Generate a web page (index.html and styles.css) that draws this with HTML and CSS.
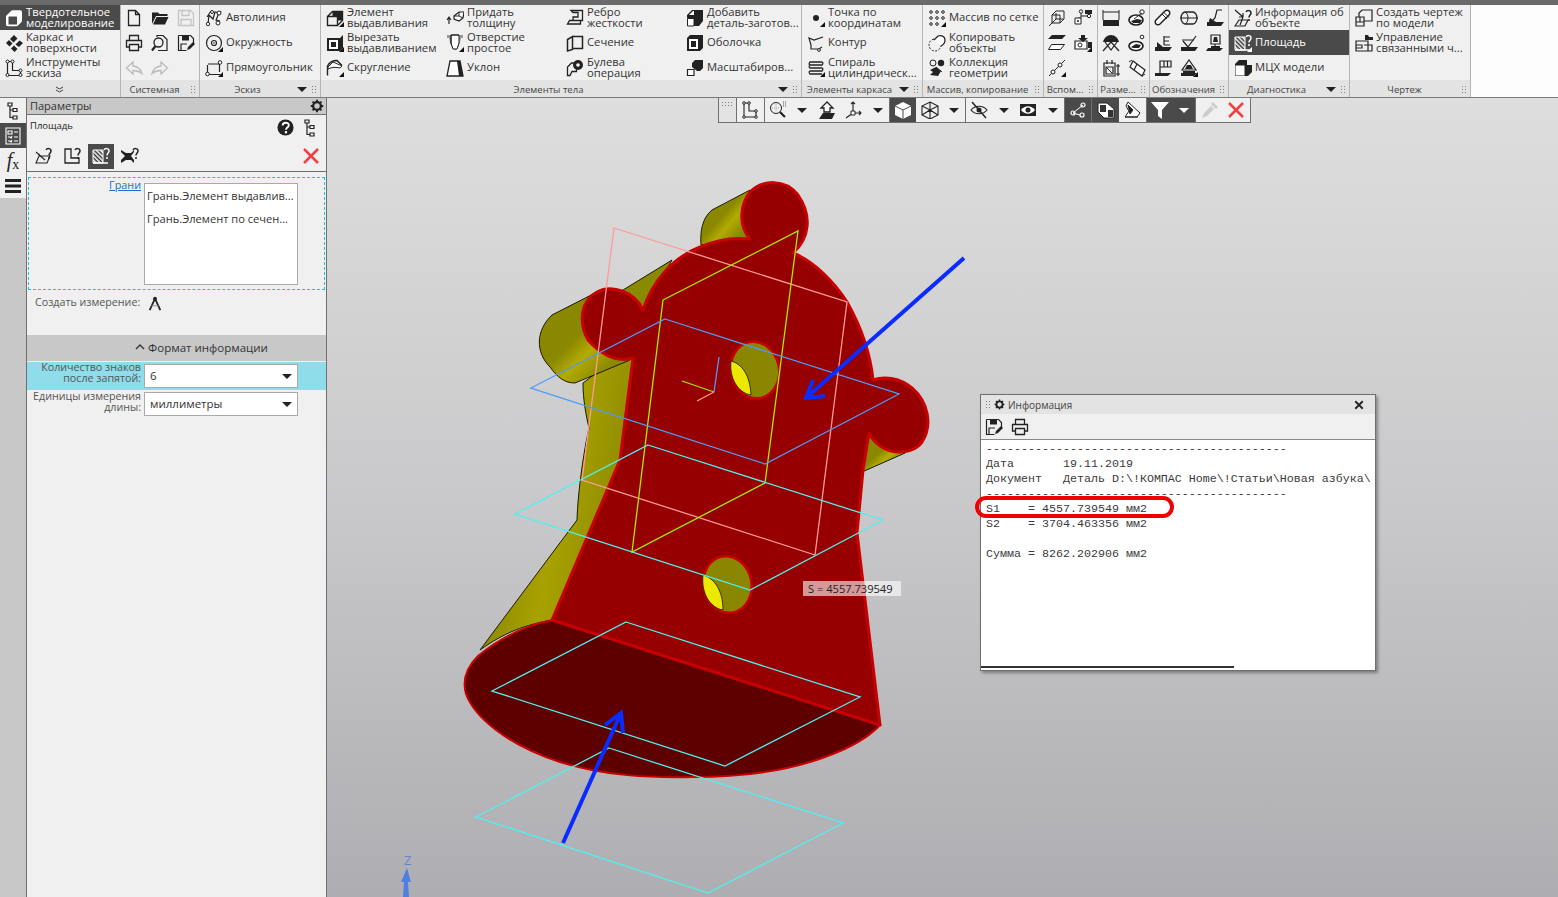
FILE: index.html
```html
<!DOCTYPE html>
<html lang="ru">
<head>
<meta charset="utf-8">
<title>КОМПАС — Площадь</title>
<link rel="stylesheet" href="styles.css">
</head>
<body>
<svg class="defs" aria-hidden="true">
<symbol id="mk" viewBox="0 0 18 18"><path d="M18 13v5h-5z" fill="#111"/></symbol>
<symbol id="mk2" viewBox="0 0 18 18"><path d="M18 13v5h-5z" fill="#fff"/></symbol>
<symbol id="solid" viewBox="0 0 18 18"><path d="M1 7l5-5c.5-.5 1-.7 2-.7h7c1.500 0 2 .7 2 2v8c0 1-.2 1.400-.7 2l-3.300 3.300c-.5.500-1 .7-2 .7H3c-1.300 0-2-.7-2-2z" fill="currentColor"/><path d="M3.500 7.500h8.500v8H3.500z" fill="#4a4a4a"/></symbol>
<symbol id="surf" viewBox="0 0 18 18"><path d="M5 5l4-4 3.500 3.500-4 4zM10.500 10.500l4-4L18 9l-4 4zM1 9l3-3 3.500 3.500-3 3zM6 14.500l3-3 3.500 3.500-3 3z" fill="#222"/></symbol>
<symbol id="sk" viewBox="0 0 18 18"><path d="M2.500 2.500h5v9h8v5h-13z" fill="none" stroke="#222" stroke-width="1.200"/><g fill="#fff" stroke="#222"><circle cx="2.500" cy="2.500" r="1.500"/><circle cx="7.500" cy="2.500" r="1.500"/><circle cx="15.500" cy="11.500" r="1.500"/><circle cx="2.500" cy="16" r="1.500"/><circle cx="15.500" cy="16" r="1.500"/></g></symbol>
<symbol id="new" viewBox="0 0 18 18"><path d="M3.500 1.500h7l4 4v11h-11zM10.500 1.500v4h4" fill="none" stroke="#222" stroke-width="1.300"/></symbol>
<symbol id="open" viewBox="0 0 18 18"><path d="M1 5V3.500h6l1.500 1.500h8v2H5L1 15z M2 15.500l3.500-7.500h12L14 15.500z" fill="#222"/></symbol>
<symbol id="save" viewBox="0 0 18 18"><path d="M1.500 1.500h12l3 3v12h-15zM5 1.500v5h7v-5M4 16.500v-6h10v6" fill="none" stroke="currentColor" stroke-width="1.300"/></symbol>
<symbol id="saveas" viewBox="0 0 18 18"><path d="M1.500 1.500h12l3 3v6M1.500 1.500v15h8M4 16v-6h6" fill="none" stroke="#222" stroke-width="1.200"/><path d="M5 1.500h7v5H5z" fill="#222"/><path d="M10 16l1-3 5-5 2 2-5 5z" fill="#222"/></symbol>
<symbol id="print" viewBox="0 0 18 18"><path d="M4.500 6.500v-5h9v5M4 13H1.500V6.500h15V13H14M4.500 10.500h9v6h-9z" fill="none" stroke="#222" stroke-width="1.300"/></symbol>
<symbol id="prev" viewBox="0 0 18 18"><path d="M6 3V1.500h6l4 4v11H7" fill="none" stroke="#222" stroke-width="1.200"/><circle cx="7.500" cy="8.500" r="4.500" fill="none" stroke="#222" stroke-width="1.300"/><path d="M4.500 12L1 16.500" stroke="#222" stroke-width="2.200"/></symbol>
<symbol id="undo" viewBox="0 0 18 18"><path d="M8 3L1.500 9 8 15v-3.500c3 0 6 .5 9 3-1-4-4-7-9-7.500z" fill="none" stroke="#bbb" stroke-width="1.300"/></symbol>
<symbol id="redo" viewBox="0 0 18 18"><path d="M10 3l6.500 6-6.500 6v-3.500c-3 0-6 .5-9 3 1-4 4-7 9-7.500z" fill="none" stroke="#bbb" stroke-width="1.300"/></symbol>
<symbol id="auto" viewBox="0 0 18 18"><path d="M3 15l1-9 4 4 2-7 4 1-3 7 4 1M6 2L2 8M16 2l-2 3" fill="none" stroke="#222" stroke-width="1.200"/><g fill="#fff" stroke="#222"><circle cx="3" cy="15" r="1.700"/><circle cx="13" cy="14" r="2"/><circle cx="14" cy="4" r="2"/><circle cx="7" cy="3" r="1.500"/></g></symbol>
<symbol id="circ" viewBox="0 0 18 18"><circle cx="9" cy="9" r="7.500" fill="none" stroke="#222" stroke-width="1.200"/><circle cx="9" cy="9" r="2.500" fill="none" stroke="#222" stroke-width="1.200"/><circle cx="9" cy="9" r=".8" fill="#222"/></symbol>
<symbol id="rect" viewBox="0 0 18 18"><path d="M2.500 6v9.500h13M3 5h11.500v8" fill="none" stroke="#222" stroke-width="1.200"/><g fill="#fff" stroke="#222"><circle cx="15" cy="3.500" r="1.800"/><circle cx="2.500" cy="15" r="1.800"/></g></symbol>
<symbol id="ext" viewBox="0 0 18 18"><path d="M1.500 16.500V7.500h10v9zM1.500 7.500l5-5h10v9l-5 5" fill="none" stroke="#222" stroke-width="1.400"/><path d="M6.500 2.500h10v9h-5v-4h-5z" fill="#222"/></symbol>
<symbol id="cut" viewBox="0 0 18 18"><path d="M1 4h13l3-3v13l-3 3H1z" fill="#222"/><path d="M3 6h9v9H3z" fill="#fff"/><path d="M5 8h5v5H5z" fill="#222"/></symbol>
<symbol id="fil" viewBox="0 0 18 18"><path d="M1.500 16.500V7C3 4 6 1.500 11 1.500l5 5" fill="none" stroke="#222" stroke-width="1.400"/><path d="M2 8l5-5 9 4-2 2c-4-1-8-1-12 1z" fill="#fff" stroke="#222"/></symbol>
<symbol id="thick" viewBox="0 0 18 18"><path d="M8 7l5-4h5l-1 6-4 3-5-2z" fill="#fff" stroke="#222" stroke-width="1.200"/><path d="M13 3v4l4 2M8 7l5 0" stroke="#222" fill="none"/><path d="M3 15V9M1 11l2-3 2 3" stroke="#222" fill="none" stroke-width="1.200"/></symbol>
<symbol id="hole" viewBox="0 0 18 18"><path d="M1 1h16v3h-2l-2 8-3 4H8l-3-4-2-8H1z" fill="#999"/><path d="M5 1h8v8l-2 6H7L5 9z" fill="#fff" stroke="#222"/><path d="M5 1h8M5 1v9" stroke="#222"/></symbol>
<symbol id="slope" viewBox="0 0 18 18"><path d="M4 2h10l3 15H1z" fill="#fff" stroke="#222" stroke-width="1.300"/><path d="M11 2h3l3 15h-4z" fill="#222"/></symbol>
<symbol id="rib" viewBox="0 0 18 18"><path d="M5 1.500h11.500v10h-2V15H1.500l2-3.500H7V8h5V3.500H7zM3 11.500h11" fill="none" stroke="#222" stroke-width="1.300"/></symbol>
<symbol id="sect" viewBox="0 0 18 18"><path d="M1.500 5.500l5-3v13l-5 1.500zM6.500 2.500h10v12h-10" fill="none" stroke="#222" stroke-width="1.500"/></symbol>
<symbol id="bool" viewBox="0 0 18 18"><path d="M1.500 16.500V8l4-4h5v8.500H6l-2 4z" fill="none" stroke="#222" stroke-width="1.300"/><circle cx="12" cy="6" r="5" fill="#222"/><circle cx="12" cy="6" r="1.800" fill="#fff"/></symbol>
<symbol id="add" viewBox="0 0 18 18"><path d="M1 17V6l5-5h11v11l-4 5H8V9H1z" fill="#222"/><path d="M1.500 9.500h6.500v7.500H1.500z" fill="#fff" stroke="#222"/><path d="M7 2l-4 4h5V2z" fill="#fff"/></symbol>
<symbol id="shell" viewBox="0 0 18 18"><path d="M1 4l3-3h13v13l-3 3H1z" fill="#222"/><path d="M3 5h9v10H3z" fill="#fff"/><path d="M5 7h5v6H5z" fill="#222"/></symbol>
<symbol id="scale" viewBox="0 0 18 18"><path d="M6 8V4l3-3h8v8l-3 3h-3V8zM6 8h5v4" fill="#222"/><path d="M1.500 10.500h6.500v6H1.500z" fill="#fff" stroke="#222" stroke-width="1.200"/></symbol>
<symbol id="pt" viewBox="0 0 18 18"><circle cx="9" cy="9" r="3" fill="#222"/></symbol>
<symbol id="contour" viewBox="0 0 18 18"><path d="M16 3L7 6 2 4l2 7v4h8l3-2" fill="none" stroke="#222" stroke-width="1.200"/><circle cx="12" cy="16" r="1.400" fill="#fff" stroke="#222"/></symbol>
<symbol id="spiral" viewBox="0 0 18 18"><path d="M3 3h12c2 1 0 3 0 3H3c-2-1 0-3 0-3zM3 6c-2 2 0 3 0 3h12c2 1 0 3 0 3H3c-2 1 0 3 0 3h12" fill="none" stroke="#222" stroke-width="1.300"/></symbol>
<symbol id="grid" viewBox="0 0 18 18"><g fill="none" stroke="#222"><circle cx="3" cy="3" r="1.300"/><circle cx="9" cy="3" r="1.300"/><circle cx="15" cy="3" r="1.300"/><circle cx="3" cy="9" r="1.300"/><circle cx="9" cy="9" r="1.300"/><circle cx="15" cy="9" r="1.300"/><circle cx="3" cy="15" r="1.300"/><circle cx="9" cy="15" r="1.300"/></g></symbol>
<symbol id="copy" viewBox="0 0 18 18"><circle cx="7" cy="11" r="6" fill="none" stroke="#222" stroke-dasharray="2 1.500"/><path d="M6 6l4-4c3-1 7 0 7 4 0 3-2 5-4 6" fill="#fff" stroke="#222" stroke-width="1.300"/></symbol>
<symbol id="coll" viewBox="0 0 18 18"><circle cx="5" cy="4" r="3" fill="none" stroke="#222"/><circle cx="13" cy="4" r="3.200" fill="#222"/><path d="M2 11l6-3 5 4-3 5-8-1 3-3z" fill="#222"/><path d="M8 8l6 5" stroke="#222"/></symbol>
<symbol id="a1" viewBox="0 0 18 18"><path d="M4 6h8v8H4zM4 6l4-4h8v8l-4 4M1 17l7-7M8 10h7M8 10V4" fill="none" stroke="#222"/></symbol>
<symbol id="a2" viewBox="0 0 18 18"><path d="M7 2v7H4M7 7h7M2 13h5" fill="none" stroke="#222"/><circle cx="7" cy="2.500" r="1.700" fill="#fff" stroke="#222"/><circle cx="15" cy="7" r="1.700" fill="#fff" stroke="#222"/><path d="M11 1h7v4h-7z" fill="#222"/><path d="M1 9h6v6H1z" fill="#fff" stroke="#222"/><circle cx="4" cy="12" r="1" fill="#222"/></symbol>
<symbol id="a3" viewBox="0 0 18 18"><path d="M4 1h14l-4 4H0z" fill="#222"/><path d="M3.500 10.500h13l-4 5H.5z" fill="#fff" stroke="#222"/></symbol>
<symbol id="a4" viewBox="0 0 18 18"><path d="M1 7h12v8H1z" fill="#fff" stroke="#222" stroke-width="1.200"/><path d="M7 1h4v3h3l-5 4-5-4h3zM14 8h4v6h-4z" fill="#222"/><circle cx="6" cy="11" r="2" fill="none" stroke="#222"/></symbol>
<symbol id="a5" viewBox="0 0 18 18"><path d="M1 17L17 1" stroke="#222"/><circle cx="5" cy="13" r="2" fill="#fff" stroke="#222"/><circle cx="12" cy="6" r="2" fill="#fff" stroke="#222"/></symbol>
<symbol id="d1" viewBox="0 0 18 18"><path d="M1 1v10M17 1v10M1 3h16" fill="none" stroke="#222"/><path d="M1 11h16v6H1z" fill="#222"/><path d="M4 11l-3 3" stroke="#222"/></symbol>
<symbol id="d2" viewBox="0 0 18 18"><ellipse cx="8" cy="11" rx="7" ry="5" fill="#fff" stroke="#222" stroke-width="1.700"/><path d="M3 12l6-2 5 1-2 3H5z" fill="#222"/><circle cx="14" cy="3" r="2.200" fill="#fff" stroke="#222"/><path d="M6 10l8-6" stroke="#222"/></symbol>
<symbol id="d3" viewBox="0 0 18 18"><path d="M1 8c1-4 4-7 8-7s7 3 8 7H1z" fill="#222"/><path d="M3 8l6 8 6-8M1 17l8-9 8 9" fill="none" stroke="#222" stroke-width="1.200"/></symbol>
<symbol id="d4" viewBox="0 0 18 18"><ellipse cx="8" cy="12" rx="7" ry="4.500" fill="#fff" stroke="#222" stroke-width="1.700"/><path d="M3 13l5-3 5 1-2 3H5z" fill="#222"/><circle cx="14" cy="3" r="1.800" fill="#fff" stroke="#222"/></symbol>
<symbol id="d5" viewBox="0 0 18 18"><path d="M2 4h11v13H2zM5 1v4M10 1v4M16 5v12M14 7h4M14 15h4M4 8h7v7H4z" fill="none" stroke="#222" stroke-width="1.200"/><path d="M5 9l5 5" stroke="#222"/></symbol>
<symbol id="d6" viewBox="0 0 18 18"><path d="M5 2l12 9-3 6-12-9zM5 2L2 8M9 5l-3 6" fill="#fff" stroke="#222" stroke-width="1.200"/><path d="M1 3l3-2M17 15l-3 2" stroke="#222"/></symbol>
<symbol id="n1" viewBox="0 0 18 18"><path d="M2 11l9-9c1-1 3-1 4 0s1 3 0 4l-9 9c-1 1-3 1-4 0s-1-3 0-4z" fill="#fff" stroke="#222" stroke-width="1.500"/><path d="M8 5l5 5M10 3.500l5 5" stroke="#222"/></symbol>
<symbol id="n2" viewBox="0 0 18 18"><path d="M5 3h8c2 0 4 3 4 6s-2 6-4 6H5C3 15 1 12 1 9s2-6 4-6z" fill="none" stroke="#222" stroke-width="1.300"/><path d="M5 3c2 1 3 3 3 6s-1 5-3 6M0 9h18" fill="none" stroke="#222"/></symbol>
<symbol id="n3" viewBox="0 0 18 18"><path d="M1 13h17l-3 4H1z" fill="#222"/><path d="M16 1h-5L9 9l-3 3-3-1" fill="none" stroke="#222" stroke-width="1.200"/><path d="M4 9l6 4H3z" fill="#222"/></symbol>
<symbol id="n4" viewBox="0 0 18 18"><path d="M1 13h17l-3 4H1z" fill="#222"/><path d="M10 2v9M10 3h6M10 7h5M10 11h6" fill="none" stroke="#222" stroke-width="1.200"/><path d="M3 8l6 5H3z" fill="#222"/></symbol>
<symbol id="n5" viewBox="0 0 18 18"><path d="M1 13h17l-3 4H1z" fill="#222"/><path d="M3 7l5 6 8-11" fill="none" stroke="#222" stroke-width="1.200"/><path d="M2 6l12 0" stroke="#222"/></symbol>
<symbol id="n6" viewBox="0 0 18 18"><path d="M2 14h15l-3 3H0z" fill="#222"/><path d="M5 1h9v9H5zM9 10v4" fill="none" stroke="#222" stroke-width="1.200"/><path d="M8 3h3l1 5H7zM5 12h9v2H5z" fill="#222"/></symbol>
<symbol id="n7" viewBox="0 0 18 18"><path d="M1 14h16l-3 3H1z" fill="#222"/><path d="M6 2h11v6H6zM10 2v6M13.500 2v6M6 2v12" fill="none" stroke="#222" stroke-width="1.200"/></symbol>
<symbol id="n8" viewBox="0 0 18 18"><path d="M1 14h16l-3 3H1z" fill="#222"/><path d="M9 1l7 10H2z" fill="none" stroke="#222" stroke-width="1.200"/><path d="M7 6h4l2 4H5zM3 12h12v2H3z" fill="#222"/></symbol>
<symbol id="info" viewBox="0 0 18 18"><path d="M1 1l8 7M9 8H5M9 8V4M1 17l4-6h9l-3 6zM9 8l-3 8" fill="none" stroke="#222" stroke-width="1.200"/></symbol>
<symbol id="area" viewBox="0 0 18 18"><path d="M1 3h10v13H1z" fill="url(#hatch)" stroke="currentColor"/><path d="M1 16h15" stroke="currentColor" stroke-width="1.500"/></symbol>
<symbol id="qm" viewBox="0 0 18 18"><path d="M12 3c1-2 5-2 5 1 0 2-2 2-2 4.500M15 10v2" fill="none" stroke="currentColor" stroke-width="1.500"/></symbol>
<symbol id="mch" viewBox="0 0 18 18"><path d="M1 17V5l4-4h8v5l5 0v7l-4 4z" fill="#222"/><path d="M1.500 6.500h9v10h-9z" fill="#fff"/></symbol>
<symbol id="draw" viewBox="0 0 18 18"><path d="M1 8h8v9H1zM4 8V4l3-3h10v11h-8M1 13h8M5 8v5" fill="none" stroke="#222" stroke-width="1.200"/></symbol>
<symbol id="link" viewBox="0 0 18 18"><path d="M1 7h12v10H1zM1 11h6v3H1M9 11h8v6H9" fill="none" stroke="#222" stroke-width="1.200"/><path d="M10 1h3l1 2h4v3h-8z" fill="#222"/></symbol>
<symbol id="tree" viewBox="0 0 18 18"><path d="M4 1h4v3H4zM9 6.500h4v3H9zM9 14h4v3H9zM6 4v11.500h3M6 8h3" fill="none" stroke="#222" stroke-width="1.200"/></symbol>
<symbol id="form" viewBox="0 0 18 18"><path d="M2 1h14v16H2zM4 4h4v3H4zM10 5h4M4 10h2l1 1 1-2M10 10h4M4 14h2l1 1 1-2M10 14h4" fill="none" stroke="currentColor" stroke-width="1.100"/></symbol>
<symbol id="bars" viewBox="0 0 18 18"><path d="M1 2h16v3H1zM1 7.500h16v3H1zM1 13h16v3H1z" fill="#222"/></symbol>
<symbol id="gear" viewBox="0 0 18 18"><circle cx="9" cy="9" r="5" fill="none" stroke="#222" stroke-width="3"/><path d="M9 1v3M9 14v3M1 9h3M14 9h3M3.300 3.300l2 2M12.700 12.700l2 2M3.300 14.700l2-2M12.700 5.300l2-2" stroke="#222" stroke-width="2.400"/></symbol>
<symbol id="help" viewBox="0 0 18 18"><circle cx="9" cy="9" r="8.500" fill="#222"/><path d="M6 7c0-4 6.500-4 6.500-.5 0 2.500-3 2.500-3 5" fill="none" stroke="#fff" stroke-width="2"/><path d="M8.300 12.800h2.400v2.400H8.300z" fill="#fff"/></symbol>
<symbol id="cross" viewBox="0 0 18 18"><path d="M2 2l14 14M16 2L2 16" stroke="#f04040" stroke-width="2.500" fill="none"/></symbol>
<symbol id="p1" viewBox="0 0 18 18"><path d="M2 16l3-7h11l-3 7zM2 5l9 8M7 10l-2-3" fill="none" stroke="#222" stroke-width="1.100"/></symbol>
<symbol id="p2" viewBox="0 0 18 18"><path d="M2 2h6v9h8v5H2z" fill="none" stroke="#222" stroke-width="1.300"/></symbol>
<symbol id="p4" viewBox="0 0 18 18"><path d="M0 3l5 3h5l3-3v2l-3 4 3 4v3l-3-3H5l-5 3v-3l4-4-4-4z" fill="#222"/></symbol>
<symbol id="comp" viewBox="0 0 18 18"><path d="M9 3L3 16M9 3l6 13" fill="none" stroke="#222" stroke-width="2"/><circle cx="9" cy="3" r="2.200" fill="#222"/><path d="M5 11h8" stroke="#888"/></symbol>
<symbol id="lcs" viewBox="0 0 18 18"><path d="M3 2h5v8h7v6H3z" fill="none" stroke="#222" stroke-width="1.100"/><g fill="#fff" stroke="#222"><circle cx="3" cy="2" r="1.300"/><circle cx="8" cy="2" r="1.300"/><circle cx="15" cy="10" r="1.300"/><circle cx="3" cy="16" r="1.300"/><circle cx="15" cy="16" r="1.300"/></g></symbol>
<symbol id="zoom" viewBox="0 0 18 18"><circle cx="7" cy="7" r="5.500" fill="none" stroke="#222"/><path d="M7 3v8M3 7h8" stroke="#aaa" stroke-dasharray="1 1"/><path d="M11 11l5 5" stroke="#222" stroke-width="2.200"/><path d="M14 1h3M14 3h3M14 5h3" stroke="#555" stroke-dasharray="1 1"/></symbol>
<symbol id="orient" viewBox="0 0 18 18"><path d="M9 1l6 6h-3v4h-6V7H3z" fill="#fff" stroke="#222" stroke-width="1.300"/><path d="M5 12h12l-3 6H1z" fill="#222"/></symbol>
<symbol id="axes" viewBox="0 0 18 18"><path d="M9 1v11M7 3l2-2 2 2M9 12h8M15 10l2 2-2 2M9 12l-7 5" fill="none" stroke="#222" stroke-width="1.100"/><path d="M7 10h4v4H7z" fill="#fff" stroke="#222"/></symbol>
<symbol id="cube" viewBox="0 0 18 18"><path d="M9 1l8 4v9l-8 4-8-4V5z" fill="#fff"/><path d="M1 5l8 4 8-4M9 9v9" fill="none" stroke="#4a4a4a"/></symbol>
<symbol id="wire" viewBox="0 0 18 18"><path d="M9 1l8 4v9l-8 4-8-4V5zM1 5l8 4 8-4M9 9v9M1 14l8-5 8 5M9 1v8" fill="none" stroke="#222" stroke-width="1.100"/></symbol>
<symbol id="eyeoff" viewBox="0 0 18 18"><path d="M1 9c4-5 12-5 16 0-4 5-12 5-16 0z" fill="none" stroke="#222" stroke-width="1.200"/><circle cx="9" cy="9" r="2.500" fill="#222"/><path d="M2 1l14 16" stroke="#222" stroke-width="1.500"/></symbol>
<symbol id="eyebox" viewBox="0 0 18 18"><path d="M1 3h16v12H1z" fill="#222"/><path d="M2 9c4-5 10-5 14 0-4 5-10 5-14 0z" fill="#fff"/><circle cx="9" cy="9" r="2.500" fill="#222"/></symbol>
<symbol id="nodes" viewBox="0 0 18 18"><path d="M4 12l10-8M11 14l-7-2" stroke="#fff" fill="none"/><g fill="none" stroke="#fff" stroke-width="1.200"><circle cx="4" cy="12" r="2"/><circle cx="14" cy="4" r="2"/><circle cx="13" cy="14" r="2"/></g></symbol>
<symbol id="layers" viewBox="0 0 18 18"><path d="M1 2h9l7 6v9H7L1 11z" fill="#fff" stroke="currentColor"/><path d="M3 4h6v7H3zM11 9h5v7h-5z" fill="#333"/></symbol>
<symbol id="layers2" viewBox="0 0 18 18"><path d="M5 1l12 11-3 4H2l4-6-3-5z" fill="#fff" stroke="#222"/><path d="M5 4l5 5-3 4-1-5zM2 16h13" fill="#222" stroke="#222"/></symbol>
<symbol id="funnel" viewBox="0 0 18 18"><path d="M0 1h18l-7 8v9l-4-3V9z" fill="#fff"/></symbol>
<symbol id="drop" viewBox="0 0 18 18"><path d="M1 17l2-5 7-7 3 3-7 7zM10 3l2-2 5 5-2 2z" fill="#ccc"/></symbol>
<symbol id="closeb" viewBox="0 0 12 12"><path d="M1.500 1.500l9 9M10.500 1.500l-9 9" stroke="#222" stroke-width="2.200"/></symbol>
</svg>

<header class="ribbon">
  <section class="sec">
    <div class="body">
      <div class="tool on"><svg class="ico"><use href="#solid"/></svg><span>Твердотельное моделирование</span></div>
      <div class="tool"><svg class="ico"><use href="#surf"/></svg><span>Каркас и поверхности</span></div>
      <div class="tool"><svg class="ico"><use href="#sk"/></svg><span>Инструменты эскиза</span></div>
    </div>
    <div class="foot center"><svg class="chev" viewBox="0 0 9 7"><path d="M1 1l3.500 2L8 1M1 4l3.500 2L8 4" fill="none" stroke="#444"/></svg></div>
  </section>
  <section class="sec">
    <div class="body icons c26">
      <div class="tool"><svg class="ico"><use href="#new"/></svg></div>
      <div class="tool"><svg class="ico"><use href="#print"/></svg></div>
      <div class="tool"><svg class="ico"><use href="#undo"/></svg></div>
      <div class="tool"><svg class="ico"><use href="#open"/></svg></div>
      <div class="tool"><svg class="ico"><use href="#prev"/></svg></div>
      <div class="tool"><svg class="ico"><use href="#redo"/></svg></div>
      <div class="tool"><svg class="ico dim"><use href="#save"/></svg></div>
      <div class="tool"><svg class="ico"><use href="#saveas"/></svg></div>
    </div>
    <div class="foot"><span class="name">Системная</span><i class="grip"></i></div>
  </section>
  <section class="sec">
    <div class="body">
      <div class="tool"><svg class="ico"><use href="#auto"/></svg><span>Автолиния</span></div>
      <div class="tool"><svg class="ico"><use href="#circ"/><use href="#mk"/></svg><span>Окружность</span></div>
      <div class="tool"><svg class="ico"><use href="#rect"/><use href="#mk"/></svg><span>Прямоугольник</span></div>
    </div>
    <div class="foot"><span class="name">Эскиз</span><i class="caret"></i><i class="grip"></i></div>
  </section>
  <section class="sec">
    <div class="body">
      <div class="tool"><svg class="ico"><use href="#ext"/><use href="#mk"/></svg><span>Элемент выдавливания</span></div>
      <div class="tool"><svg class="ico"><use href="#cut"/><use href="#mk"/></svg><span>Вырезать выдавливанием</span></div>
      <div class="tool"><svg class="ico"><use href="#fil"/><use href="#mk"/></svg><span>Скругление</span></div>
      <div class="tool"><svg class="ico"><use href="#thick"/></svg><span>Придать толщину</span></div>
      <div class="tool"><svg class="ico"><use href="#hole"/><use href="#mk"/></svg><span>Отверстие простое</span></div>
      <div class="tool"><svg class="ico"><use href="#slope"/></svg><span>Уклон</span></div>
      <div class="tool"><svg class="ico"><use href="#rib"/></svg><span>Ребро<br>жесткости</span></div>
      <div class="tool"><svg class="ico"><use href="#sect"/></svg><span>Сечение</span></div>
      <div class="tool"><svg class="ico"><use href="#bool"/></svg><span>Булева операция</span></div>
      <div class="tool"><svg class="ico"><use href="#add"/></svg><span>Добавить деталь-заготов...</span></div>
      <div class="tool"><svg class="ico"><use href="#shell"/></svg><span>Оболочка</span></div>
      <div class="tool"><svg class="ico"><use href="#scale"/></svg><span>Масштабиров...</span></div>
    </div>
    <div class="foot"><span class="name">Элементы тела</span><i class="caret"></i><i class="grip"></i></div>
  </section>
  <section class="sec">
    <div class="body">
      <div class="tool"><svg class="ico"><use href="#pt"/><use href="#mk"/></svg><span>Точка по координатам</span></div>
      <div class="tool"><svg class="ico"><use href="#contour"/></svg><span>Контур</span></div>
      <div class="tool"><svg class="ico"><use href="#spiral"/><use href="#mk"/></svg><span>Спираль цилиндрическ...</span></div>
    </div>
    <div class="foot"><span class="name">Элементы каркаса</span><i class="caret"></i><i class="grip"></i></div>
  </section>
  <section class="sec">
    <div class="body">
      <div class="tool"><svg class="ico"><use href="#grid"/><use href="#mk"/></svg><span>Массив по сетке</span></div>
      <div class="tool"><svg class="ico"><use href="#copy"/></svg><span>Копировать объекты</span></div>
      <div class="tool"><svg class="ico"><use href="#coll"/></svg><span>Коллекция геометрии</span></div>
    </div>
    <div class="foot"><span class="name">Массив, копирование</span><i class="grip"></i></div>
  </section>
  <section class="sec aux">
    <div class="body icons c26">
      <div class="tool"><svg class="ico"><use href="#a1"/></svg></div>
      <div class="tool"><svg class="ico"><use href="#a3"/></svg></div>
      <div class="tool"><svg class="ico"><use href="#a5"/><use href="#mk"/></svg></div>
      <div class="tool"><svg class="ico"><use href="#a2"/></svg></div>
      <div class="tool"><svg class="ico"><use href="#a4"/><use href="#mk"/></svg></div>
    </div>
    <div class="foot"><span class="name">Вспом...</span><i class="grip"></i></div>
  </section>
  <section class="sec dims">
    <div class="body icons c25">
      <div class="tool"><svg class="ico"><use href="#d1"/></svg></div>
      <div class="tool"><svg class="ico"><use href="#d3"/></svg></div>
      <div class="tool"><svg class="ico"><use href="#d5"/></svg></div>
      <div class="tool"><svg class="ico"><use href="#d2"/></svg></div>
      <div class="tool"><svg class="ico"><use href="#d4"/></svg></div>
      <div class="tool"><svg class="ico"><use href="#d6"/></svg></div>
    </div>
    <div class="foot"><span class="name">Разме...</span><i class="grip"></i></div>
  </section>
  <section class="sec">
    <div class="body icons c26">
      <div class="tool"><svg class="ico"><use href="#n1"/></svg></div>
      <div class="tool"><svg class="ico"><use href="#n4"/></svg></div>
      <div class="tool"><svg class="ico"><use href="#n7"/></svg></div>
      <div class="tool"><svg class="ico"><use href="#n2"/></svg></div>
      <div class="tool"><svg class="ico"><use href="#n5"/></svg></div>
      <div class="tool"><svg class="ico"><use href="#n8"/><use href="#mk"/></svg></div>
      <div class="tool"><svg class="ico"><use href="#n3"/></svg></div>
      <div class="tool"><svg class="ico"><use href="#n6"/></svg></div>
    </div>
    <div class="foot"><span class="name">Обозначения</span><i class="grip"></i></div>
  </section>
  <section class="sec">
    <div class="body">
      <div class="tool"><svg class="ico"><use href="#info"/><use href="#qm"/></svg><span>Информация об объекте</span></div>
      <div class="tool on"><svg class="ico"><use href="#area"/><use href="#qm"/><use href="#mk2"/></svg><span>Площадь</span></div>
      <div class="tool"><svg class="ico"><use href="#mch"/></svg><span>МЦХ модели</span></div>
    </div>
    <div class="foot"><span class="name">Диагностика</span><i class="caret"></i><i class="grip"></i></div>
  </section>
  <section class="sec">
    <div class="body">
      <div class="tool"><svg class="ico"><use href="#draw"/></svg><span>Создать чертеж по модели</span></div>
      <div class="tool"><svg class="ico"><use href="#link"/></svg><span>Управление связанными ч...</span></div>
    </div>
    <div class="foot"><span class="name">Чертеж</span><i class="grip"></i></div>
  </section>
</header>

<main class="main">
  <nav class="rail">
    <div class="rail-items">
      <div class="rail-item"><svg class="ico"><use href="#tree"/></svg></div>
      <div class="rail-item on"><svg class="ico"><use href="#form"/></svg></div>
      <div class="rail-item fx"><i>f</i><i class="x">x</i></div>
      <div class="rail-item"><svg class="ico"><use href="#bars"/></svg></div>
    </div>
  </nav>

  <aside class="panel">
    <div class="panel-head"><span>Параметры</span><svg class="ico small"><use href="#gear"/></svg></div>
    <div class="panel-tools">
      <div class="pt-top">
        <span class="pt-title">Площадь</span>
        <svg class="ico help"><use href="#help"/></svg>
        <svg class="ico"><use href="#tree"/></svg>
      </div>
      <div class="pt-row">
        <div class="pt-btn"><svg class="ico"><use href="#p1"/><use href="#qm"/></svg></div>
        <div class="pt-btn"><svg class="ico"><use href="#p2"/><use href="#qm"/></svg></div>
        <div class="pt-btn on"><svg class="ico"><use href="#area"/><use href="#qm"/></svg></div>
        <div class="pt-btn"><svg class="ico"><use href="#p4"/><use href="#qm"/></svg></div>
        <svg class="ico close"><use href="#cross"/></svg>
      </div>
    </div>
    <div class="faces">
      <a class="faces-link" href="#">Грани</a>
      <div class="listbox">
        <div class="list-item">Грань.Элемент выдавлив...</div>
        <div class="list-item">Грань.Элемент по сечен...</div>
      </div>
    </div>
    <div class="measure"><span class="lbl">Создать измерение:</span><svg class="ico"><use href="#comp"/></svg></div>
    <div class="group-head"><svg class="up" viewBox="0 0 10 6"><path d="M1 5l4-4 4 4" fill="none" stroke="#333" stroke-width="1.400"/></svg>Формат информации</div>
    <div class="field hl">
      <label class="lbl">Количество знаков после запятой:</label>
      <div class="select"><span>6</span><i class="caret"></i></div>
    </div>
    <div class="field">
      <label class="lbl">Единицы измерения длины:</label>
      <div class="select"><span>миллиметры</span><i class="caret"></i></div>
    </div>
  </aside>

  <div class="canvas">
    <svg class="scene" viewBox="327 98 1231 799">
      <defs>
        <linearGradient id="olive" x1="0" y1="0" x2="1" y2="1">
          <stop offset="0" stop-color="#8a8a00"/><stop offset=".45" stop-color="#8a8700"/><stop offset=".6" stop-color="#b2ab00"/><stop offset=".8" stop-color="#8a8800"/><stop offset="1" stop-color="#8a8800"/>
        </linearGradient>
        <linearGradient id="cone" x1="0" y1="0" x2="1" y2=".35">
          <stop offset="0" stop-color="#707000"/><stop offset=".6" stop-color="#a8a200"/><stop offset="1" stop-color="#8b8800"/>
        </linearGradient>
        <pattern id="hatch" width="3" height="3" patternUnits="userSpaceOnUse" patternTransform="rotate(45)"><rect width="3" height="3" fill="#fff"/><rect width="3" height="1.500" fill="#333"/></pattern>
      </defs>
      <g stroke="#1a1a00" stroke-width="1">
        <path d="M583 383C583 400 586 415 589 428C584 450 578 490 577 520L480 650C505 632 525 625 552 620L620 460L640 340Z" fill="url(#cone)"/>
        <path d="M597 292L552 315C536 330 535 352 550 367C558 378 565 383 575 383L630 360L615 300Z" fill="url(#olive)"/>
        <path d="M623 290L672 260L645 310L630 300Z" fill="#8a8a00"/>
        <path d="M750 190L712 210C702 218 700 232 701 245L750 240Z" fill="url(#olive)"/>
        <path d="M869 433L862 472L905 453Z" fill="url(#olive)"/>
      </g>
      <path d="M552 620C522 626 498 640 478 656C466 668 462 680 466 694C474 716 505 744 560 762C605 776 650 778 693 777C745 777 790 770 825 757C850 748 868 738 880 725Z" fill="#5f0000" stroke="#c80000" stroke-width="2"/>
      <path d="M552 620L620 460L633 358C612 364 597 350 588 340C578 322 581 300 597 292C612 284 635 292 643 310C652 282 672 258 700 247C716 240 733 237 750 239C738 225 740 205 750 192C762 180 785 178 798 195C812 215 810 238 793 253C815 262 835 283 847 302C860 325 870 350 873 380C885 376 900 378 912 388C928 402 933 425 922 442C910 458 880 455 869 433L863 470L857 533L880 725Z" fill="#960000" stroke="#c80000" stroke-width="3" stroke-linejoin="round"/>
      <ellipse cx="755" cy="370" rx="24" ry="28.500" transform="rotate(-12 755 370)" fill="#8a8600" stroke="#c80000" stroke-width="2.500"/>
      <path d="M731 361C742 364 750 375 751 395C738 393 729 378 731 361Z" fill="#ece800" stroke="#111" stroke-width=".8"/>
      <ellipse cx="727.500" cy="584.500" rx="24" ry="28.500" transform="rotate(-12 727.500 584.500)" fill="#8a8600" stroke="#c80000" stroke-width="2.500"/>
      <path d="M703 575C714 578 723 590 723 610C710 608 701 593 703 575Z" fill="#ece800" stroke="#111" stroke-width=".8"/>
      <g fill="none" stroke-width="1.300" stroke-linejoin="miter">
        <path d="M614 228L847 302L815 555L582 480Z" stroke="#ff9a9a"/>
        <path d="M663 300L798 231L765 483L632 552Z" stroke="#a4ea00"/>
        <path d="M665 319L899 394L765 464L531 388Z" stroke="#4f9bf5"/>
        <path d="M648 445L883 520L750 590L515 514Z" stroke="#4ff0f0"/>
        <path d="M626 622L860 697L725 766L492 691Z" stroke="#4ff0f0"/>
        <path d="M609 748L843 823L708 893L476 817Z" stroke="#4ff0f0"/>
        <path d="M682 381L714 392" stroke="#a4ea00"/>
        <path d="M719 357L714 392" stroke="#4f9bf5"/>
        <path d="M697 401L714 392" stroke="#ff9a9a"/>
      </g>
      <g fill="none" stroke="#0a2cff" stroke-width="4">
        <path d="M964 258L806 398M813 380L806 398L825 396"/>
        <path d="M563 843L621 713M605 725L621 713L623 733"/>
      </g>
      <path d="M407 868L411 882H408L409 897H403L404 882H401Z" fill="#4f7fe0"/>
      <text x="404" y="865" class="zlabel">Z</text>
    </svg>

    <div class="view-bar">
      <div class="vb-group grip-cell"><i class="grip wide"></i></div>
      <div class="vb-group"><div class="vb-btn"><svg class="ico"><use href="#lcs"/></svg></div></div>
      <div class="vb-group">
        <div class="vb-btn"><svg class="ico"><use href="#zoom"/></svg></div><div class="vb-car"><i class="caret"></i></div>
        <div class="vb-btn"><svg class="ico"><use href="#orient"/></svg></div>
        <div class="vb-btn"><svg class="ico"><use href="#axes"/></svg></div><div class="vb-car"><i class="caret"></i></div>
      </div>
      <div class="vb-group">
        <div class="vb-btn on"><svg class="ico"><use href="#cube"/></svg></div>
        <div class="vb-btn"><svg class="ico"><use href="#wire"/></svg></div><div class="vb-car"><i class="caret"></i></div>
      </div>
      <div class="vb-group">
        <div class="vb-btn"><svg class="ico"><use href="#eyeoff"/></svg></div><div class="vb-car"><i class="caret"></i></div>
        <div class="vb-btn"><svg class="ico"><use href="#eyebox"/></svg></div><div class="vb-car"><i class="caret"></i></div>
      </div>
      <div class="vb-group">
        <div class="vb-btn on"><svg class="ico"><use href="#nodes"/></svg></div>
      </div>
      <div class="vb-group">
        <div class="vb-btn on"><svg class="ico"><use href="#layers"/></svg></div>
        <div class="vb-btn"><svg class="ico"><use href="#layers2"/></svg></div>
      </div>
      <div class="vb-group">
        <div class="vb-btn on"><svg class="ico"><use href="#funnel"/></svg></div><div class="vb-car on"><i class="caret"></i></div>
      </div>
      <div class="vb-group">
        <div class="vb-btn"><svg class="ico"><use href="#drop"/></svg></div>
        <div class="vb-btn"><svg class="ico"><use href="#cross"/></svg></div>
      </div>
    </div>

    <div class="tip">S = 4557.739549</div>

    <div class="info">
      <div class="info-title"><i class="grip"></i><svg class="ico tiny"><use href="#gear"/></svg><span>Информация</span><svg class="close-x" viewBox="0 0 12 12"><use href="#closeb"/></svg></div>
      <div class="info-tools"><svg class="ico"><use href="#saveas"/></svg><svg class="ico"><use href="#print"/></svg></div>
<pre class="info-text">-------------------------------------------
Дата       19.11.2019
Документ   Деталь D:\!КОМПАС Home\!Статьи\Новая азбука\
-------------------------------------------
S1    = 4557.739549 мм2
S2    = 3704.463356 мм2

Сумма = 8262.202906 мм2</pre>
      <div class="info-scroll"></div>
      <div class="mark"></div>
    </div>
  </div>
</main>
</body>
</html>
```
FILE: styles.css
```css
* { box-sizing: border-box; }
html, body { margin: 0; height: 100%; overflow: hidden; }
body {
  width: 1558px;
  height: 897px;
  display: flex;
  flex-direction: column;
  font-family: "Open Sans", "Noto Sans", sans-serif;
  font-size: 11.5px;
  color: #333;
  background: #fff;
}
.defs { position: absolute; width: 0; height: 0; }
.ico {
  display: block;
  flex: none;
  width: 18px;
  height: 18px;
  color: #222;
}
.ico.dim { color: #c4c4c4; }

/* ribbon */
.ribbon {
  display: flex;
  flex: none;
  height: 98px;
  border-top: 5px solid #6a6a6a;
  border-bottom: 1px solid #7a7a7a;
  background: #fdfdfd;
}
.sec {
  display: flex;
  flex-direction: column;
  border-right: 1px solid #b5b5b5;
  background: #f0f0f0;
}
.body {
  display: grid;
  grid-auto-flow: column;
  grid-template-rows: repeat(3, 25px);
  grid-auto-columns: 120px;
  height: 75px;
}
.body.c26 { grid-auto-columns: 26px; }
.body.c25 { grid-auto-columns: 25.5px; }
.aux { width: 54px; }
.dims { width: 52px; }
.tool {
  display: flex;
  align-items: center;
  gap: 3px;
  padding-left: 5px;
  line-height: 11px;
  font-size: 11.25px;
  color: #333;
  overflow: hidden;
}
.tool span { display: block; width: 94px; margin-top: -2px; }
.sec:nth-child(3) .tool span,
.sec:nth-child(6) .tool span,
.sec:nth-child(5) .tool span { white-space: normal; width: 96px; }
.icons .tool { padding-left: 4px; }
.tool.on { background: #4a4a4a; color: #fff; }
.tool.on .ico { color: #fff; }
.foot {
  display: flex;
  align-items: center;
  flex: 1;
  padding: 1px 3px 0 2px;
  gap: 4px;
  background: #e3e3e3;
  font-size: 9.5px;
  color: #444;
}
.foot.center { justify-content: center; }
.name { flex: 1; text-align: center; white-space: nowrap; overflow: hidden; }
.chev { width: 9px; height: 7px; }
.caret {
  display: block;
  flex: none;
  width: 0;
  height: 0;
  border-left: 5px solid transparent;
  border-right: 5px solid transparent;
  border-top: 5px solid #222;
}
.grip {
  display: block;
  flex: none;
  width: 6px;
  height: 9px;
  background-image: radial-gradient(circle, #808080 0.9px, transparent 1px);
  background-size: 3px 3px;
}
.grip.wide { width: 12px; height: 6px; }

/* main */
.main { display: flex; flex: 1; min-height: 0; }
.rail {
  flex: none;
  width: 27px;
  background: #c8c8c8;
  border-right: 1px solid #6f6f6f;
}
.rail-items { background: #f0f0f0; }
.rail-item {
  display: flex;
  align-items: center;
  justify-content: center;
  height: 25px;
}
.rail-item.on { background: #4a4a4a; }
.rail-item.on .ico { color: #fff; }
.fx {
  font-family: "Liberation Serif", serif;
  font-size: 20px;
  line-height: 25px;
  color: #222;
}
.fx .x { font-size: 14px; margin-top: 7px; font-style: normal; }

/* panel */
.panel {
  flex: none;
  width: 300px;
  background: #f0f0f0;
  border-right: 1px solid #6f6f6f;
  display: flex;
  flex-direction: column;
}
.panel-head {
  display: flex;
  align-items: center;
  justify-content: space-between;
  height: 17px;
  padding: 0 2px 2px 3px;
  background: #c8c8c8;
  border-bottom: 1px solid #6f6f6f;
  font-size: 11px;
  color: #333;
}
.ico.small { width: 14px; height: 14px; margin-top: 2px; }
.panel-tools {
  height: 57px;
  border-bottom: 1px solid #6f6f6f;
}
.pt-top {
  display: flex;
  align-items: flex-start;
  height: 28px;
  padding: 4px 7px 0 3px;
  gap: 7px;
}
.pt-title { flex: 1; font-size: 9.5px; line-height: 14px; color: #222; }
.ico.help { width: 17px; height: 17px; }
.pt-row {
  display: flex;
  align-items: center;
  height: 26px;
  padding: 0 6px 0 3px;
}
.pt-btn {
  display: flex;
  align-items: center;
  justify-content: center;
  width: 26px;
  height: 25px;
  margin-right: 3px;
}
.pt-btn.on { background: #4a4a4a; }
.pt-btn.on .ico { color: #fff; }
.close { margin-left: auto; }
.faces {
  display: flex;
  justify-content: flex-end;
  gap: 3px;
  height: 113px;
  margin: 5px 1px 0 1px;
  padding: 5px 26px 4px 0;
  border: 1px dashed #20c0d8;
}
.faces-link { color: #1a6fd0; font-size: 10.8px; line-height: 14px; height: 15px; margin-top: -5px; text-decoration: underline; }
.listbox {
  width: 154px;
  height: 102px;
  background: #fff;
  border: 1px solid #aaa;
  padding-top: 2px;
}
.list-item { height: 23px; line-height: 20px; padding-left: 2px; white-space: nowrap; color: #333; font-size: 11.1px; }
.lbl { color: #555; text-align: right; line-height: 11px; font-size: 10.7px; }
.measure {
  display: flex;
  align-items: center;
  gap: 7px;
  height: 28px;
  padding: 0 0 4px 8px;
}
.measure .ico { width: 16px; height: 16px; margin-top: 3px; }
.group-head {
  display: flex;
  align-items: center;
  justify-content: center;
  gap: 3px;
  height: 26px;
  margin-top: 17px;
  background: #c8c8c8;
  color: #333;
  padding: 0 0 2px 50px;
}
.up { width: 10px; height: 6px; }
.field {
  display: grid;
  grid-template-columns: 114px 154px;
  gap: 3px;
  align-items: center;
  height: 28px;
  padding-right: 28px;
  margin-top: 1px;
}
.field .lbl { padding-bottom: 6px; }
.field.hl { background: #8fdcea; }
.field + .field { height: 26px; }
.field + .field .lbl { padding-bottom: 4px; }
.select {
  display: flex;
  align-items: center;
  justify-content: space-between;
  height: 24px;
  padding: 0 5px 2px 5px;
  background: #fff;
  border: 1px solid #aaa;
  color: #333;
}
.select .caret { margin-top: 2px; }

/* canvas */
.canvas {
  position: relative;
  flex: 1;
  background: linear-gradient(#dedede, #c9c9cb 50%, #aeaeb2);
  overflow: hidden;
}
.scene { position: absolute; left: 0; top: 0; width: 1231px; height: 799px; }
.zlabel { font-family: "Open Sans", sans-serif; font-size: 13px; fill: #5a86d8; }

.view-bar {
  position: absolute;
  left: 391px;
  top: 0;
  display: flex;
  height: 25px;
  background: #f0f0f0;
  border: 1px solid #6f6f6f;
  border-top: 0;
}
.vb-group { display: flex; align-items: stretch; border-right: 1px solid #6f6f6f; }
.vb-group:last-child { border-right: 0; }
.grip-cell { width: 18px; padding: 3px 2px; background: #e3e3e3; }
.vb-btn { display: flex; align-items: center; justify-content: center; width: 26.7px; }
.vb-btn.on { background: #4a4a4a; }
.vb-car { display: flex; align-items: center; justify-content: center; width: 22px; }
.vb-car.on { background: #4a4a4a; }
.vb-car.on .caret { border-top-color: #fff; }

.tip {
  position: absolute;
  left: 476px;
  top: 483px;
  width: 98px;
  height: 15px;
  padding-left: 5px;
  line-height: 15px;
  font-size: 11.1px;
  color: #222;
  background: rgba(255, 255, 255, .6);
}

.info {
  position: absolute;
  left: 653px;
  top: 296px;
  width: 396px;
  height: 277px;
  background: #fff;
  border: 1px solid #6f6f6f;
  box-shadow: 2px 2px 3px rgba(0, 0, 0, .35);
}
.info-title {
  display: flex;
  align-items: center;
  gap: 3px;
  height: 19px;
  padding: 0 11px 0 4px;
  background: #e3e3e3;
  font-size: 10px;
  color: #444;
}
.info-title .ico.tiny { width: 11px; height: 11px; }
.close-x { width: 10px; height: 10px; margin-left: auto; }
.info-tools {
  display: flex;
  gap: 8px;
  align-items: center;
  height: 26px;
  padding-left: 4px;
  background: #f0f0f0;
  border-bottom: 1px solid #888;
}
.info-text {
  margin: 0;
  padding: 2px 0 0 5px;
  height: 224px;
  overflow: hidden;
  font-family: "Liberation Mono", monospace;
  font-size: 11.67px;
  line-height: 15px;
  color: #3a3a3a;
}
.info-scroll { width: 253px; height: 2px; background: #333; margin-top: 2px; }
.mark {
  position: absolute;
  left: -6px;
  top: 101px;
  width: 199px;
  height: 22px;
  border: 4px solid #f00000;
  border-radius: 11px;
}
```
